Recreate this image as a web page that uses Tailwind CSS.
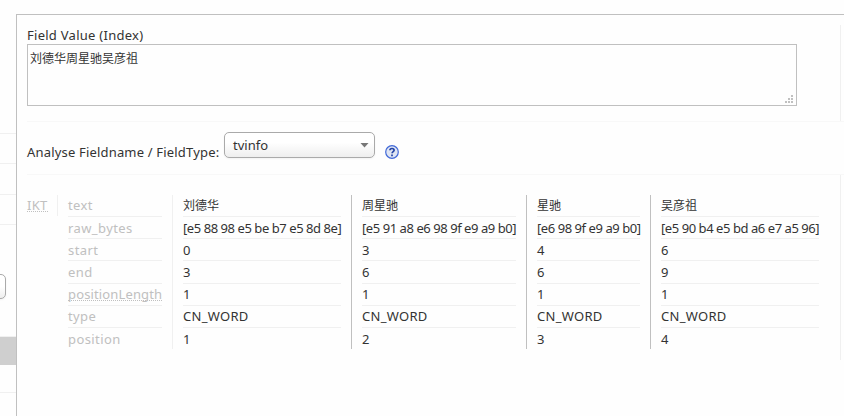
<!DOCTYPE html>
<html lang="en">
<head>
<meta charset="utf-8">
<title>Analysis</title>
<script src="https://cdn.jsdelivr.net/npm/@tailwindcss/browser@4"></script>
</head>
<body class="h-[416px] w-[844px] overflow-hidden bg-[#fefefe] font-['Noto_Sans','Noto_Sans_CJK_SC',sans-serif] text-[13px] leading-[20px] text-[#333]">
<div class="flex h-full">
  <aside class="flex w-4 shrink-0 flex-col overflow-hidden pt-[133px]">
    <div class="h-[30px] shrink-0 border-t border-[#f0f0f0]"></div>
    <div class="h-[31px] shrink-0 border-t border-[#f0f0f0]"></div>
    <div class="h-[30px] shrink-0 border-t border-[#f0f0f0]"></div>
    <div class="h-[113px] shrink-0 border-y border-[#f0f0f0] pt-[49px]">
      <div class="-ml-5 h-[25px] w-[26px] rounded-[5px] border border-[#aaa] bg-linear-to-b from-white from-50% to-[#eee] shadow-xs"></div>
    </div>
    <div class="h-7 shrink-0 bg-[#cfcfcf]"></div>
    <div class="mt-[27px] h-px shrink-0 bg-[#f0f0f0]"></div>
  </aside>
  <main class="mt-[14px] min-w-0 flex-1 border-l border-t border-[#c0c0c0] pl-[10px] pt-[10px]">
    <section class="h-[97px] border-b border-[#f8f8f8]">
      <div class="h-[96px] w-[814px] border-r border-[#f0f0f0]">
        <div class="h-[19px] whitespace-nowrap tracking-[0.27px]">Field Value (Index)</div>
        <div class="relative h-[62px] w-[770px] border border-[#c0c0c0] pl-[2px] pt-[4px] text-[12px]">刘德华周星驰吴彦祖
          <svg class="absolute bottom-[2px] right-[3px] fill-[#c0c0c0]" width="8" height="8"><path d="M6 0h2v2H6zM3 3h2v2H3zM6 3h2v2H6zM0 6h2v2H0zM3 6h2v2H3zM6 6h2v2H6z"/></svg>
        </div>
      </div>
    </section>
    <section class="flex h-[53px] border-b border-[#f8f8f8]">
      <div class="w-[197px] whitespace-nowrap pt-5 tracking-[0.18px]">Analyse Fieldname / FieldType:</div>
      <div class="mt-[10px] flex h-[26px] w-[151px] items-center justify-between rounded-[5px] border border-[#aaa] bg-linear-to-b from-white from-40% to-[#eee] pl-2 pr-[5px] shadow-xs">
        <span>tvinfo</span>
        <svg width="9" height="5" class="fill-[#777]"><path d="M.5 0h8L4.500 4.500z"/></svg>
      </div>
      <svg class="ml-[10px] mt-[23px]" width="14" height="14" viewBox="0 0 14 14"><circle cx="7" cy="7" r="6.3" fill="#dfe5f3" stroke="#4169d8" stroke-width="1.2"/><path d="M4.9 5.2c.1-2.3 4.2-2.2 4.2 0 0 1.4-2 1.5-2 3.1M7 9.600v1.700" fill="none" stroke="#2344a6" stroke-width="1.7"/></svg>
    </section>
    <section class="h-[185px] w-[814px] border-r border-[#f0f0f0] pt-5">
      <div class="flex whitespace-nowrap" id="analysis">
        <div class="h-[21px] w-[31px] shrink-0 border-r border-[#f0f0f0] text-[#c0c0c0] tracking-[0.3px]"><span class="inline-block h-[17px] border-b border-dotted border-[#c0c0c0]">IKT</span></div>
      </div>
    </section>
  </main>
</div>
<script>
const columns = [
  ["ml-[10px] w-[94px] text-[#c0c0c0] tracking-[0.4px]", ["text","raw_bytes","start","end","positionLength","type","position"]],
  ["ml-[10px] w-[180px] border-x border-l-[#f0f0f0] border-r-[#c0c0c0] px-[10px]", ["刘德华","[e5 88 98 e5 be b7 e5 8d 8e]","0","3","1","CN_WORD","1"]],
  ["w-[175px] border-r border-[#c0c0c0] px-[10px]", ["周星驰","[e5 91 a8 e6 98 9f e9 a9 b0]","3","6","1","CN_WORD","2"]],
  ["w-[124px] border-r border-[#c0c0c0] px-[10px]", ["星驰","[e6 98 9f e9 a9 b0]","4","6","1","CN_WORD","3"]],
  ["w-[178px] px-[10px]", ["吴彦祖","[e5 90 b4 e5 bd a6 e7 a5 96]","6","9","1","CN_WORD","4"]]
];
const rows = ["h-[22px]","h-[22px] pt-[1px]","h-[22px] pt-[1px]","h-[23px] pt-[1px]","h-[22px]","h-[22px]","h-[21px] pt-[1px]"];
document.getElementById("analysis").insertAdjacentHTML("beforeend", columns.map(([cls, cells]) =>
  `<div class="h-[154px] shrink-0 ${cls}">` + cells.map((t, i) => {
    let style = i < 6 ? " border-b border-[#f0f0f0]" : "";
    if (/[\u4e00-\u9fff]/.test(t)) style += " text-[12px] pt-[1px]";
    if (t[0] === "[") style += " tracking-[-0.44px]";
    if (t === "CN_WORD") style += " tracking-[0.3px]";
    const body = t === "positionLength" ? `<span class="inline-block h-[17px] border-b border-dotted border-[#c0c0c0] tracking-[0.14px]">${t}</span>` : t;
    return `<div class="${rows[i]}${style}">${body}</div>`;
  }).join("") + "</div>").join(""));
</script>
</body>
</html>
